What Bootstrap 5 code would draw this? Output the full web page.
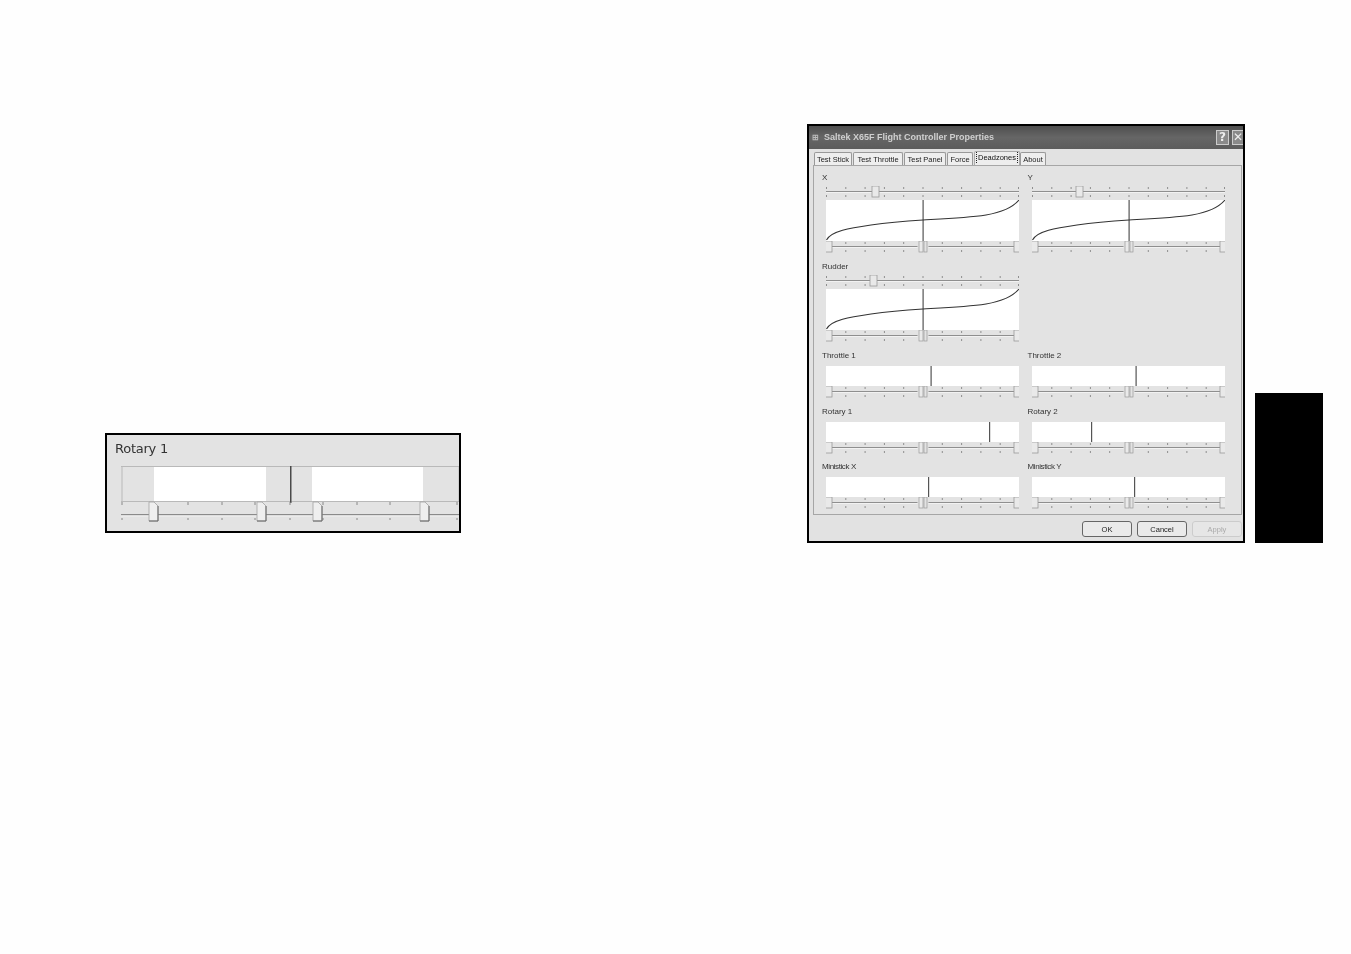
<!doctype html>
<html lang="en">
<head>
<meta charset="utf-8">
<title>Saltek X65F Flight Controller Properties</title>
<link href="https://cdn.jsdelivr.net/npm/bootstrap@5.3.0/dist/css/bootstrap.min.css" rel="stylesheet">
<style>
body{background:#fefefe;margin:0;overflow:hidden}
.sheet{height:954px;padding:0 0 411px 105px;align-items:flex-end}
svg{display:block}
.crop{width:356px;height:100px;border:2px solid #000;background:#e3e3e3;margin:0 0 10px;overflow:hidden}
.crop-in{padding:6px 0 0 8px;filter:blur(.55px)}
.crop-label{font:13px/16px "DejaVu Sans",sans-serif;color:#333;margin-bottom:9px;letter-spacing:-.25px}
.crop svg{margin-left:6px}
.dlg{width:438px;height:419px;margin-left:346px;border:2px solid #000;background:#e2e2e2;overflow:hidden}
.dlg-in{filter:blur(.5px);height:100%}
.ttl{height:23px;background:linear-gradient(#4f4f4f,#666 50%,#5c5c5c);padding:0 0 0 3px;color:#cfcfcf;font:bold 9px/23px "Liberation Sans",sans-serif;letter-spacing:0}
.ttl-ico{font-size:8px;color:#bbb;margin-right:5px}
.ttl-btn{width:13px;height:15px;border:1px solid #ccc;background:#8a8a8a;color:#eee;font:bold 12px/13px "DejaVu Sans",sans-serif;text-align:center}
.ttl-x{width:11px;margin-left:3px;border-right:0;overflow:hidden}
.nav.tabs-x{margin:2px 0 0 5px;border:0;height:14px;align-items:flex-end;flex-wrap:nowrap;position:relative;z-index:1}
.tabs-x .nav-link{font:7.5px/11px "Liberation Sans",sans-serif;color:#222;border:1px solid #999;border-bottom:0;border-radius:2px 2px 0 0;background:#eee;padding:1px 0 0;margin:0 1px 0 0;height:13px;text-align:center;white-space:nowrap}
.tabs-x .nav-link.active{height:14px;background:#ededed;color:#111;border-color:#aaa;padding-top:0;margin:0}
.tabs-x .nav-link.active span{border:1px dotted #222;border-width:0 1px;margin:0 1px;display:block}
.tw38{width:38px}.tw50{width:50px}.tw42{width:42px}.tw26{width:26px}.tw46{width:46px}
.pnl{margin-left:4px;width:429px;height:350px;border:1px solid #a6a6a6;background:#e3e3e3;padding:6px 8px 0}
.lbl{font:8px/12px "Liberation Sans",sans-serif;color:#333;height:12px}
.lbl-tight{letter-spacing:-.4px}
.wid{margin-left:4px;width:193px}
.mt-t{margin-top:2px}
.gapr{margin-bottom:8px}
.gapr-s{margin-bottom:7px}
.plot{margin-top:2px}
.plot-s{margin-top:4px}
.foot{padding:6px 0 0 273px;gap:5px}
.btn.dbtn{width:50px;height:16px;margin:0;padding:0;font:7.5px/13px "Liberation Sans",sans-serif;color:#222;background:#eaeaea;border:1.5px solid #666;border-radius:3px}
.btn.dbtn:disabled{color:#aaa;border:1px solid #ccc;background:#e6e6e6;opacity:1}
.tabmark{width:68px;height:150px;margin-left:10px;background:#000}
</style>
</head>
<body>
<svg width="0" height="0" class="position-absolute">
  <defs>
    <g id="tk" stroke="#8e8e8e" stroke-width="1">
      <path d="M.5 1v2M19.8 1v2M39.1 1v2M58.4 1v2M77.7 1v2M97 1v2M116.3 1v2M135.6 1v2M154.9 1v2M174.2 1v2M192.5 1v2"/>
      <path d="M.5 9v2M19.8 9v2M39.1 9v2M58.4 9v2M77.7 9v2M97 9v2M116.3 9v2M135.6 9v2M154.9 9v2M174.2 9v2M192.5 9v2"/>
    </g>
    <g id="ln"><rect x="0" y="5" width="193" height="1" fill="#8f8f8f"/><rect x="0" y="6" width="193" height="1" fill="#f2f2f2"/></g>
    <g id="th"><rect x="-3" y="0" width="7" height="11" fill="#e9e9e9" stroke="#9a9a9a" stroke-width=".8"/></g>
    <g id="th2"><rect x="-5.500" y="0" width="11" height="12" fill="#e3e3e3"/><rect x="-4" y="0" width="4" height="11" fill="#eaeaea" stroke="#999" stroke-width=".7"/><rect x="1" y="0" width="3" height="11" fill="#e3e3e3" stroke="#999" stroke-width=".7"/></g>
    <g id="top"><use href="#ln"/><use href="#tk"/></g>
    <g id="bot"><use href="#ln"/><use href="#tk"/><use href="#th" x="2"/><use href="#th" x="191"/></g>
    <path id="cv" d="M.5 40C5 31 24 28 45 25 65 22 80 21 97 20 115 19 140 18 160 15 178 12 188 6 193 0" fill="none" stroke="#333" stroke-width="1.1"/>
  </defs>
</svg>

<main class="sheet d-flex">
  <figure class="crop flex-shrink-0">
    <div class="crop-in">
      <div class="crop-label">Rotary 1</div>
      <svg width="340" height="57" viewBox="0 0 340 57">
        <path d="M0 .5H340M0 35.5H340M1 0V36M338 0V36" stroke="#b9b9b9" fill="none"/>
        <rect x="33" y="1" width="112" height="34" fill="#fff"/>
        <rect x="191" y="1" width="111" height="34" fill="#fff"/>
        <rect x="169" y="0" width="1.500" height="37" fill="#4a4a4a"/>
        <path d="M1 36v3M67 36v3M101 36v3M134 36v3M169 36v3M202 36v3M236 36v3M269 36v3M302 36v3M336 36v3M1 52v2M67 52v2M101 52v2M134 52v2M169 52v2M202 52v2M236 52v2M269 52v2M302 52v2M336 52v2" stroke="#888"/>
        <rect x="0" y="48" width="340" height="1.400" fill="#8a8a8a"/>
        <rect x="0" y="49.400" width="340" height="1" fill="#f4f4f4"/>
        <g fill="#efefef" stroke="#a2a2a2" stroke-width=".8">
          <path d="M28 36h5l4 4v15h-9z"/>
          <path d="M136 36h5l4 4v15h-9z"/>
          <path d="M192 36h5l4 4v15h-9z"/>
          <path d="M299 36h5l4 4v15h-9z"/>
        </g>
        <path d="M37 40v15H28M145 40v15H136M201 40v15H192M308 40v15H299" fill="none" stroke="#666"/>
      </svg>
    </div>
  </figure>

  <section class="dlg flex-shrink-0">
    <div class="dlg-in">
      <header class="ttl d-flex align-items-center">
        <span class="ttl-ico">⊞</span>
        <span class="flex-grow-1">Saltek X65F Flight Controller Properties</span>
        <span class="ttl-btn">?</span>
        <span class="ttl-btn ttl-x">✕</span>
      </header>
      <ul class="nav nav-tabs tabs-x">
        <li class="nav-item"><a class="nav-link tw38" href="#">Test Stick</a></li>
        <li class="nav-item"><a class="nav-link tw50" href="#">Test Throttle</a></li>
        <li class="nav-item"><a class="nav-link tw42" href="#">Test Panel</a></li>
        <li class="nav-item"><a class="nav-link tw26" href="#">Force</a></li>
        <li class="nav-item"><a class="nav-link active tw46" href="#"><span>Deadzones</span></a></li>
        <li class="nav-item"><a class="nav-link tw26" href="#">About</a></li>
      </ul>
      <div class="pnl">
        <div class="row g-0 gapr">
          <div class="col-6">
            <div class="lbl">X</div>
            <svg class="wid mt-t" width="193" height="12"><use href="#top"/><use href="#th" x="49"/></svg>
            <svg class="wid plot" width="193" height="41"><rect width="193" height="41" fill="#fff"/><rect x="96.500" width="1.200" height="41" fill="#555"/><use href="#cv"/></svg>
            <svg class="wid" width="193" height="12"><use href="#bot"/><use href="#th2" x="97"/></svg>
          </div>
          <div class="col-6">
            <div class="lbl">Y</div>
            <svg class="wid mt-t" width="193" height="12"><use href="#top"/><use href="#th" x="47"/></svg>
            <svg class="wid plot" width="193" height="41"><rect width="193" height="41" fill="#fff"/><rect x="96.500" width="1.200" height="41" fill="#555"/><use href="#cv"/></svg>
            <svg class="wid" width="193" height="12"><use href="#bot"/><use href="#th2" x="97"/></svg>
          </div>
        </div>
        <div class="row g-0 gapr">
          <div class="col-6">
            <div class="lbl">Rudder</div>
            <svg class="wid mt-t" width="193" height="12"><use href="#top"/><use href="#th" x="47"/></svg>
            <svg class="wid plot" width="193" height="41"><rect width="193" height="41" fill="#fff"/><rect x="96.500" width="1.200" height="41" fill="#555"/><use href="#cv"/></svg>
            <svg class="wid" width="193" height="12"><use href="#bot"/><use href="#th2" x="97"/></svg>
          </div>
          <div class="col-6"></div>
        </div>
        <div class="row g-0 gapr">
          <div class="col-6">
            <div class="lbl">Throttle 1</div>
            <svg class="wid plot-s" width="193" height="20"><rect width="193" height="20" fill="#fff"/><rect x="104.500" width="1.200" height="20" fill="#555"/></svg>
            <svg class="wid" width="193" height="12"><use href="#bot"/><use href="#th2" x="97"/></svg>
          </div>
          <div class="col-6">
            <div class="lbl">Throttle 2</div>
            <svg class="wid plot-s" width="193" height="20"><rect width="193" height="20" fill="#fff"/><rect x="103.500" width="1.200" height="20" fill="#555"/></svg>
            <svg class="wid" width="193" height="12"><use href="#bot"/><use href="#th2" x="97"/></svg>
          </div>
        </div>
        <div class="row g-0 gapr-s">
          <div class="col-6">
            <div class="lbl">Rotary 1</div>
            <svg class="wid plot-s" width="193" height="20"><rect width="193" height="20" fill="#fff"/><rect x="163" width="1.200" height="20" fill="#555"/></svg>
            <svg class="wid" width="193" height="12"><use href="#bot"/><use href="#th2" x="97"/></svg>
          </div>
          <div class="col-6">
            <div class="lbl">Rotary 2</div>
            <svg class="wid plot-s" width="193" height="20"><rect width="193" height="20" fill="#fff"/><rect x="59" width="1.200" height="20" fill="#555"/></svg>
            <svg class="wid" width="193" height="12"><use href="#bot"/><use href="#th2" x="97"/></svg>
          </div>
        </div>
        <div class="row g-0">
          <div class="col-6">
            <div class="lbl lbl-tight">Ministick X</div>
            <svg class="wid plot-s" width="193" height="20"><rect width="193" height="20" fill="#fff"/><rect x="102" width="1.200" height="20" fill="#555"/></svg>
            <svg class="wid" width="193" height="12"><use href="#bot"/><use href="#th2" x="97"/></svg>
          </div>
          <div class="col-6">
            <div class="lbl lbl-tight">Ministick Y</div>
            <svg class="wid plot-s" width="193" height="20"><rect width="193" height="20" fill="#fff"/><rect x="102" width="1.200" height="20" fill="#555"/></svg>
            <svg class="wid" width="193" height="12"><use href="#bot"/><use href="#th2" x="97"/></svg>
          </div>
        </div>
      </div>
      <div class="foot d-flex">
        <button type="button" class="btn dbtn">OK</button>
        <button type="button" class="btn dbtn">Cancel</button>
        <button type="button" class="btn dbtn" disabled>Apply</button>
      </div>
    </div>
  </section>

  <div class="tabmark flex-shrink-0"></div>
</main>
<script src="https://cdn.jsdelivr.net/npm/bootstrap@5.3.0/dist/js/bootstrap.bundle.min.js"></script>
</body>
</html>
